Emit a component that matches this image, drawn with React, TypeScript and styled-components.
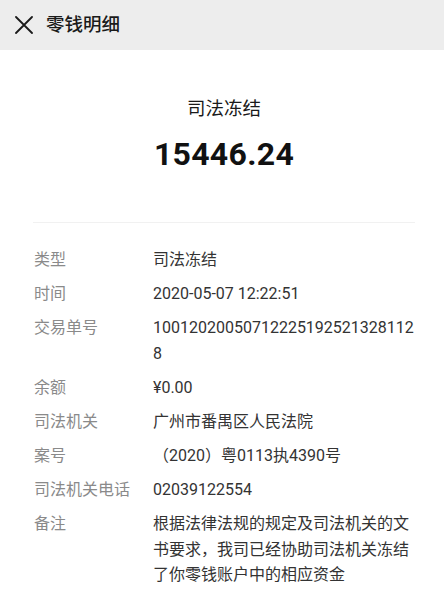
import styled, { createGlobalStyle } from 'styled-components';

const GlobalStyle = createGlobalStyle`
  html, body {
    margin: 0;
    padding: 0;
    background: #ffffff;
  }
  body {
    font-family: Roboto, "Noto Sans CJK SC", sans-serif;
    -webkit-font-smoothing: antialiased;
  }
`;

const Page = styled.div`
  width: 444px;
  min-height: 605px;
  background: #ffffff;
`;

const Header = styled.header`
  display: flex;
  align-items: center;
  height: 50px;
  padding-left: 13px;
  background: #ededed;
  box-sizing: border-box;
`;

const CloseButton = styled.button`
  display: flex;
  align-items: center;
  justify-content: center;
  width: 22px;
  height: 22px;
  padding: 0;
  border: none;
  background: none;
  margin-right: 11px;
  color: #1a1a1a;
`;

const HeaderTitle = styled.h1`
  margin: 0;
  font-size: 18.5px;
  font-weight: 500;
  color: #1a1a1a;
  line-height: 26px;
`;

const Hero = styled.section`
  display: flex;
  flex-direction: column;
  align-items: center;
  padding-top: 46px;
  padding-bottom: 48px;
  margin: 0 29px 0 33px;
  border-bottom: 1px solid #f1f1f1;
`;

const HeroLabel = styled.div`
  font-size: 18.5px;
  line-height: 26px;
  color: #1a1a1a;
`;

const Amount = styled.div`
  margin-top: 12px;
  font-family: Roboto, "Noto Sans", sans-serif;
  font-size: 32px;
  font-weight: 700;
  line-height: 40px;
  letter-spacing: 0.3px;
  color: #111111;
`;

const DetailList = styled.dl`
  display: flex;
  flex-direction: column;
  gap: 8px;
  margin: 0;
  padding: 24px 0 0 34px;
`;

const Row = styled.div`
  display: grid;
  grid-template-columns: 119px 263px;
  font-size: 16px;
  line-height: 26px;
`;

const Label = styled.dt`
  color: #8a8a8a;
`;

const Value = styled.dd<{ $tight?: boolean }>`
  margin: 0;
  color: #333333;
  word-break: break-all;
  line-height: ${(p) => (p.$tight ? '25.5px' : '26px')};
`;

const details: { label: string; value: string; tight?: boolean }[] = [
  { label: '类型', value: '司法冻结' },
  { label: '时间', value: '2020-05-07 12:22:51' },
  { label: '交易单号', value: '100120200507122251925213281128' },
  { label: '余额', value: '¥0.00' },
  { label: '司法机关', value: '广州市番禺区人民法院' },
  { label: '案号', value: '（2020）粤0113执4390号' },
  { label: '司法机关电话', value: '02039122554' },
  {
    label: '备注',
    value: '根据法律法规的规定及司法机关的文书要求，我司已经协助司法机关冻结了你零钱账户中的相应资金',
    tight: true,
  },
];

export default function App() {
  return (
    <Page>
      <GlobalStyle />
      <Header>
        <CloseButton aria-label="关闭">
          <svg width="18" height="18" viewBox="0 0 18 18" fill="none">
            <path d="M1 1L17 17M17 1L1 17" stroke="currentColor" strokeWidth="1.8" strokeLinecap="round" />
          </svg>
        </CloseButton>
        <HeaderTitle>零钱明细</HeaderTitle>
      </Header>
      <Hero>
        <HeroLabel>司法冻结</HeroLabel>
        <Amount>15446.24</Amount>
      </Hero>
      <DetailList>
        {details.map((d) => (
          <Row key={d.label}>
            <Label>{d.label}</Label>
            <Value $tight={d.tight}>{d.value}</Value>
          </Row>
        ))}
      </DetailList>
    </Page>
  );
}
